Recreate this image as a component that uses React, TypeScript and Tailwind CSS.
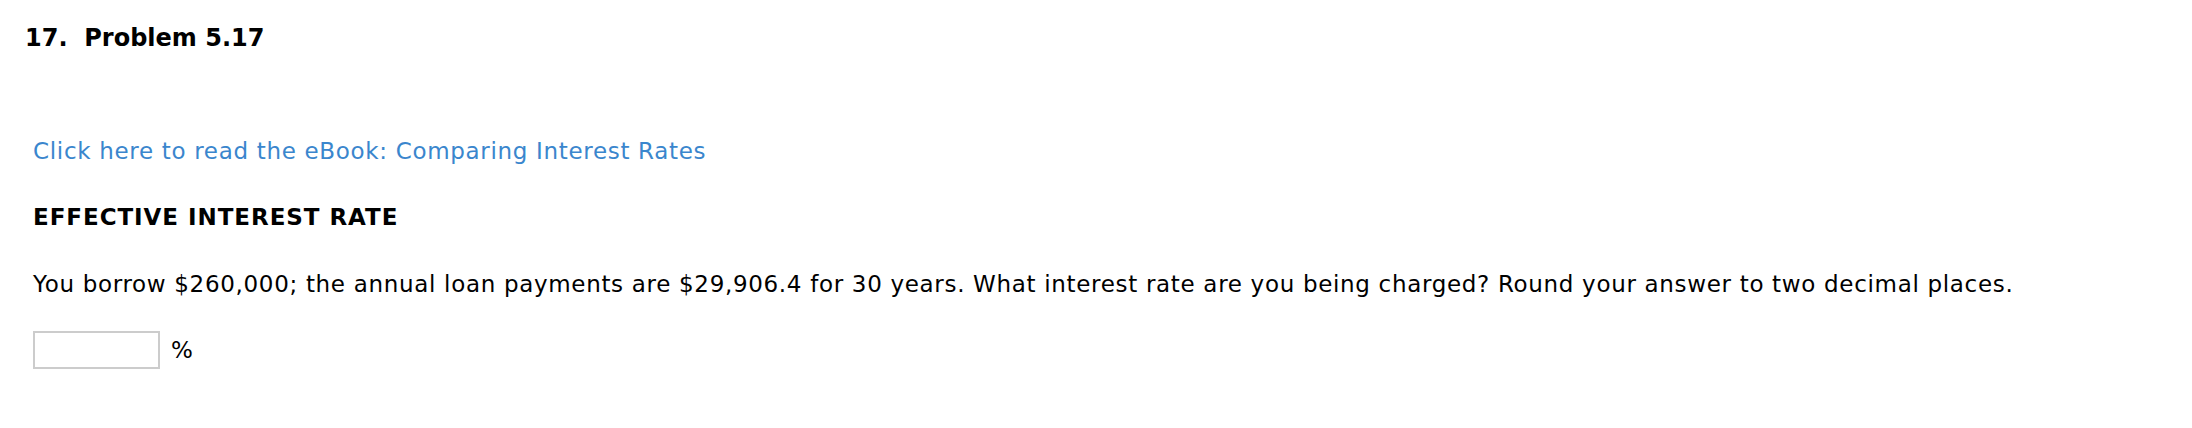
export default function App() {
  return (
    <div className="min-h-screen bg-white text-black font-['Verdana','DejaVu_Sans',sans-serif]">
      {/* Question number */}
      <div className="pl-[25px] pt-[23px]">
        <h2 className="text-[24px] leading-[30px] font-bold whitespace-pre">17.  Problem 5.17</h2>
      </div>

      <div className="pl-[33px] flex flex-col items-start">
        <a href="#" className="mt-[83px] text-[23px] leading-[30px] tracking-[0.68px] text-[#3a86cd] no-underline">
          Click here to read the eBook: Comparing Interest Rates
        </a>

        <h3 className="mt-[36px] text-[23px] leading-[30px] tracking-[0.95px] font-bold">EFFECTIVE INTEREST RATE</h3>

        <p className="mt-[37px] text-[23px] leading-[30px] tracking-[0.68px] whitespace-nowrap">
          You borrow $260,000; the annual loan payments are $29,906.4 for 30 years. What interest rate are you being charged? Round your answer to two decimal places.
        </p>

        <div className="mt-[32px] flex items-center gap-[11px]">
          <input
            type="text"
            className="w-[127px] h-[38px] border-2 border-[#cccccc] bg-white outline-none px-2 text-[23px]"
          />
          <span className="text-[23px] leading-[30px]">%</span>
        </div>
      </div>
    </div>
  );
}
